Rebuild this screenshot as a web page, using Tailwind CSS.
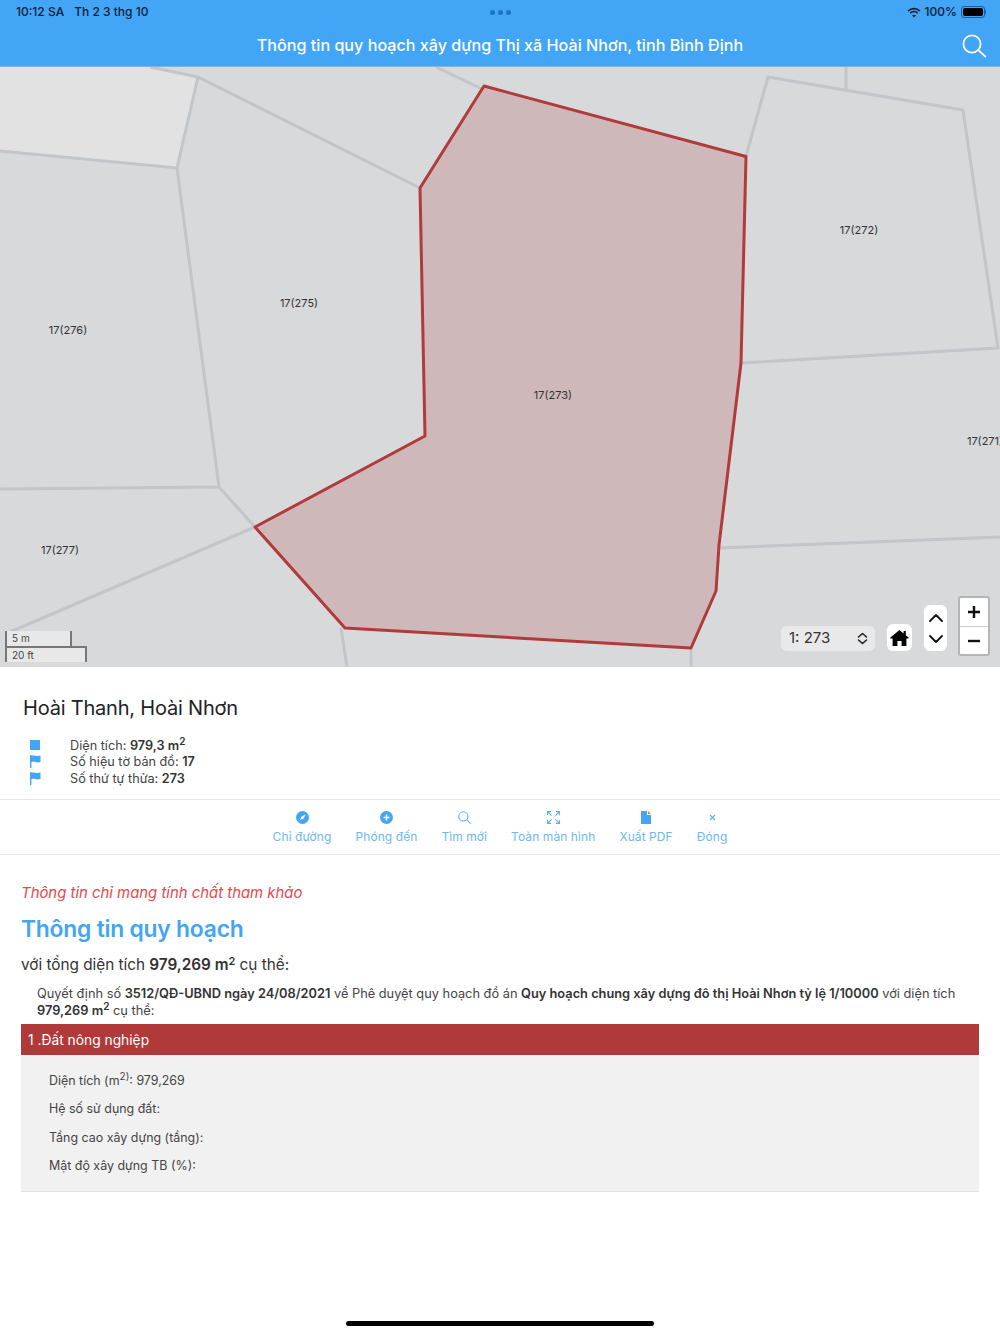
<!DOCTYPE html>
<html lang="vi">

<head>
    <meta charset="UTF-8">
    <meta name="viewport" content="width=device-width, initial-scale=1.0">
    <title>Thông tin quy hoạch</title>
    <script src="https://cdn.jsdelivr.net/npm/@tailwindcss/browser@4"></script>
</head>

<body class="bg-white font-['Inter','Liberation_Sans',sans-serif] text-[#333]">
    <div class="relative w-[1000px] h-[1334px] overflow-hidden flex flex-col">

        <!-- header -->
        <header class="relative h-[67px] shrink-0 bg-[#42a5f5] border-b border-[#7db4e3]">
            <div class="flex items-center justify-between h-[24px] pl-4 pr-[14px] text-[12px] font-medium text-[#0d2238]">
                <div class="flex gap-[10px]"><span>10:12 SA</span><span>Th 2 3 thg 10</span></div>
                <div class="flex items-center gap-[4px]">
                    <svg width="14" height="11" viewBox="0 0 14 11" fill="none" stroke="#0d2238" stroke-width="1.7">
                        <path d="M1 4 C4.4 .8 9.6 .8 13 4" />
                        <path d="M3.2 6.2 C5.4 4.2 8.6 4.2 10.8 6.2" />
                        <path d="M7 10.6 L5 8.3 C6.2 7.4 7.8 7.4 9 8.3 Z" fill="#0d2238" stroke="none" />
                    </svg>
                    <span>100%</span>
                    <div class="flex items-center">
                        <div class="w-[24px] h-[12px] rounded-[3px] border border-[#1d5f99] p-[1px]">
                            <div class="w-full h-full rounded-[2px] bg-black"></div>
                        </div>
                        <div class="w-[1px] h-[4px] bg-[#1d5f99]"></div>
                    </div>
                </div>
            </div>
            <div class="absolute left-[490px] top-[10px] flex gap-[3px]">
                <span class="w-[5px] h-[5px] rounded-full bg-[#1976c5]"></span>
                <span class="w-[5px] h-[5px] rounded-full bg-[#1976c5]"></span>
                <span class="w-[5px] h-[5px] rounded-full bg-[#1976c5]"></span>
            </div>
            <h1 class="absolute left-0 right-0 top-[34px] text-center text-white text-[16.15px] leading-[22px] font-medium">Thông tin quy hoạch xây dựng Thị xã Hoài Nhơn, tỉnh Bình Định</h1>
            <svg class="absolute left-[962px] top-[34px]" width="25" height="24" viewBox="0 0 25 24" fill="none" stroke="#fff" stroke-width="1.8" stroke-linecap="round">
                <circle cx="10" cy="10" r="8.6" />
                <path d="M16.2 16 L23.4 22.6" />
            </svg>
        </header>

        <!-- map -->
        <section class="relative h-[600px] shrink-0 bg-[#d8d9db] overflow-hidden">
            <svg class="block" width="1000" height="600" viewBox="0 67 1000 600" fill="none">
                <path d="M0 67 L150 67 L198 77 L177 168 L0 151 Z" fill="#e2e2e3" />
                <g stroke="#c2c5c9" stroke-width="3">
                    <path d="M150 67 L198 77 L420 188" />
                    <path d="M198 77 L177 168 L0 151" />
                    <path d="M177 168 L219 487 L0 489" />
                    <path d="M219 487 L255 527 L10 632" />
                    <path d="M436 67 L484 90" />
                    <path d="M746 156 L768 77 L963 110 L998 348 L741 363" />
                    <path d="M846 67 L846 89" />
                    <path d="M718 548 L1000 537" />
                    <path d="M341 628 L347 667" />
                    <path d="M691 648 L691 667" />
                </g>
                <path d="M484 86 L746 156.5 L741 363 L719 545 L716 591 L691 648 L345 628 L255 527 L425 436 L420 188 Z" fill="#cfb8b9" stroke="#b03a3c" stroke-width="3" stroke-linejoin="round" />
                <g fill="#333" font-size="11" text-anchor="middle">
                    <text x="859" y="233.5">17(272)</text>
                    <text x="299" y="306.5">17(275)</text>
                    <text x="68" y="334">17(276)</text>
                    <text x="553" y="398.5">17(273)</text>
                    <text x="985" y="445">17(271)</text>
                    <text x="60" y="553.5">17(277)</text>
                </g>
            </svg>

            <!-- scale -->
            <div class="absolute left-[5px] top-[564px] text-[10px] leading-[15px] text-[#444]">
                <div class="w-[67px] h-[15px] pl-[5px] bg-[#e8e8e8] border-l-2 border-r-2 border-[#777]">5 m</div>
                <div class="w-[82px] h-[16px] pl-[5px] bg-[#e8e8e8] border-l-2 border-r-2 border-t-2 border-[#777]">20 ft</div>
            </div>

            <!-- map controls -->
            <div class="absolute left-[781px] top-[559px] w-[94px] h-[25px] rounded-[6px] bg-[#e9e9ea] flex items-center justify-between pl-[8px] pr-[7px] text-[15px] text-[#333]">
                <span>1: 273</span>
                <svg width="11" height="13" viewBox="0 0 11 13" fill="none" stroke="#222" stroke-width="1.6" stroke-linecap="round" stroke-linejoin="round">
                    <path d="M1.5 5 L5.5 1.5 L9.5 5" />
                    <path d="M1.5 8 L5.5 11.5 L9.5 8" />
                </svg>
            </div>
            <div class="absolute left-[887px] top-[557px] w-[25px] h-[27px] rounded-[6px] bg-white flex items-center justify-center">
                <svg width="19" height="16" viewBox="0 0 19 16" fill="#000">
                    <path d="M9.5 0 L13.6 3.4 V1 H15.8 V5.2 L18.6 7.6 Q19.2 8.4 18.2 8.6 H16.4 V16 H11.6 V11 H7.4 V16 H2.6 V8.6 H.8 Q-.2 8.4 .4 7.6 Z" />
                </svg>
            </div>
            <div class="absolute left-[924px] top-[538px] w-[23px] h-[46px] rounded-[6px] bg-white flex flex-col items-center justify-center gap-[13px]">
                <svg width="14" height="8" viewBox="0 0 14 8" fill="none" stroke="#111" stroke-width="1.8" stroke-linecap="round" stroke-linejoin="round"><path d="M1 7 L7 1 L13 7" /></svg>
                <svg width="14" height="8" viewBox="0 0 14 8" fill="none" stroke="#111" stroke-width="1.8" stroke-linecap="round" stroke-linejoin="round"><path d="M1 1 L7 7 L13 1" /></svg>
            </div>
            <div class="absolute left-[958px] top-[529px] w-[32px] h-[60px] rounded-[3px] bg-white border-2 border-[#b4b5b7] flex flex-col">
                <div class="h-[29px] flex items-center justify-center border-b border-[#ccc]">
                    <svg width="12" height="12" viewBox="0 0 12 12" stroke="#111" stroke-width="2.4"><path d="M0 6 H12 M6 0 V12" /></svg>
                </div>
                <div class="flex-1 flex items-center justify-center">
                    <svg width="12" height="4" viewBox="0 0 12 4" stroke="#111" stroke-width="2.4"><path d="M0 2 H12" /></svg>
                </div>
            </div>
        </section>

        <!-- parcel info -->
        <section class="h-[133px] shrink-0 border-b border-[#e8e8e8] pl-[23px] pt-[28px]">
            <h2 class="text-[20px] leading-[26px] text-[#222] tracking-[-0.2px]">Hoài Thanh, Hoài Nhơn</h2>
            <ul class="mt-[16px] text-[12.7px] leading-[17px] text-[#444]">
                <li class="flex items-center h-[16.5px]">
                    <span class="w-[47px] pl-[7px]"><span class="block w-[10px] h-[10px] bg-[#42a5f5]"></span></span>
                    <span>Diện tích: <b class="font-semibold text-[#333]">979,3 m<sup class="text-[10px]">2</sup></b></span>
                </li>
                <li class="flex items-center h-[16.5px]">
                    <span class="w-[47px] pl-[7px]">
                        <svg class="block" width="11" height="13" viewBox="0 0 11 13" fill="#42a5f5"><path d="M0 0 H1.4 V13 H0 Z M1.4 .8 C4 -.4 6.5 2 10.5 .6 V7 C6.5 8.4 4 6 1.4 7.2 Z" /></svg>
                    </span>
                    <span>Số hiệu tờ bản đồ: <b class="font-semibold text-[#333]">17</b></span>
                </li>
                <li class="flex items-center h-[16.5px]">
                    <span class="w-[47px] pl-[7px]">
                        <svg class="block" width="11" height="13" viewBox="0 0 11 13" fill="#42a5f5"><path d="M0 0 H1.4 V13 H0 Z M1.4 .8 C4 -.4 6.5 2 10.5 .6 V7 C6.5 8.4 4 6 1.4 7.2 Z" /></svg>
                    </span>
                    <span>Số thứ tự thửa: <b class="font-semibold text-[#333]">273</b></span>
                </li>
            </ul>
        </section>

        <!-- actions -->
        <nav class="h-[55px] shrink-0 border-b border-[#e8e8e8] flex justify-center gap-[24px] pt-[11px] text-[12px] leading-[16px] tracking-[0.08px] text-[#6db8f3]">
            <a class="flex flex-col items-center gap-[5px]">
                <svg width="13" height="13" viewBox="0 0 13 13"><circle cx="6.5" cy="6.5" r="6.5" fill="#42a5f5" /><path d="M9.6 3.4 L7.6 7.6 L5.4 8.3 L3.4 9.6 L4.7 7.4 L5.4 5.4 Z" fill="#fff" /></svg>
                <span>Chỉ đường</span>
            </a>
            <a class="flex flex-col items-center gap-[5px]">
                <svg width="13" height="13" viewBox="0 0 13 13"><circle cx="6.5" cy="6.5" r="6.5" fill="#42a5f5" /><path d="M3.5 6.5 H9.5 M6.5 3.5 V9.5" stroke="#fff" stroke-width="1.5" /></svg>
                <span>Phóng đến</span>
            </a>
            <a class="flex flex-col items-center gap-[5px]">
                <svg width="13" height="13" viewBox="0 0 13 13" fill="none" stroke="#5aaff2" stroke-width="1.1"><circle cx="5.4" cy="5.4" r="4.6" /><path d="M8.8 8.8 L12.6 12.6" /></svg>
                <span>Tìm mới</span>
            </a>
            <a class="flex flex-col items-center gap-[5px]">
                <svg width="13" height="13" viewBox="0 0 13 13" fill="none" stroke="#5aaff2" stroke-width="1.1"><path d="M.6 4 V.6 H4 M.6 .6 L4.6 4.6 M9 .6 H12.4 V4 M12.4 .6 L8.4 4.6 M.6 9 V12.4 H4 M.6 12.4 L4.6 8.4 M9 12.4 H12.4 V9 M12.4 12.4 L8.4 8.4" /></svg>
                <span>Toàn màn hình</span>
            </a>
            <a class="flex flex-col items-center gap-[5px]">
                <svg width="10" height="13" viewBox="0 0 10 13" fill="#42a5f5"><path d="M0 0 H6 V4 H10 V13 H0 Z M7 0 L10 3 H7 Z" /></svg>
                <span>Xuất PDF</span>
            </a>
            <a class="flex flex-col items-center gap-[5px]">
                <svg width="13" height="13" viewBox="0 0 13 13" fill="none" stroke="#5aaff2" stroke-width="1.1"><path d="M4 4 L9 9 M9 4 L4 9" /></svg>
                <span>Đóng</span>
            </a>
        </nav>

        <!-- planning details -->
        <main class="px-[21px] pt-[28px]">
            <p class="text-[14.9px] leading-[20px] italic text-[#e5484d]">Thông tin chỉ mang tính chất tham khảo</p>
            <h2 class="mt-[11px] text-[22.8px] leading-[30px] font-semibold tracking-[-0.2px] text-[#42a5f5]">Thông tin quy hoạch</h2>
            <p class="mt-[11px] text-[15.3px] leading-[20px] text-[#333]">với tổng diện tích <b class="font-semibold">979,269 m<sup class="text-[11px]">2</sup></b> cụ thể:</p>
            <p class="mt-[10px] pl-[16px] text-[12.8px] leading-[17px] text-[#444]">Quyết định số <b class="font-semibold text-[#333]">3512/QĐ-UBND ngày 24/08/2021</b> về Phê duyệt quy hoạch đồ án <b class="font-semibold text-[#333]">Quy hoạch chung xây dựng đô thị Hoài Nhơn tỷ lệ 1/10000</b> với diện tích <b class="font-semibold text-[#333]">979,269 m<sup class="text-[10px]">2</sup></b> cụ thể:</p>
            <div class="mt-[5px] h-[31px] bg-[#b03a3a] flex items-center pl-[7px] pt-[2px] text-[13.8px] text-white">1 .Đất nông nghiệp</div>
            <div class="h-[137px] bg-[#f1f1f1] border-b border-[#e4e4e4] pl-[28px] pt-[12px] text-[12.45px] leading-[28.4px] text-[#444]">
                <p>Diện tích (m<sup class="text-[10px]">2)</sup>: 979,269</p>
                <p>Hệ số sử dụng đất:</p>
                <p>Tầng cao xây dựng (tầng):</p>
                <p>Mật độ xây dựng TB (%):</p>
            </div>
        </main>

        <!-- home indicator -->
        <div class="absolute left-[346px] top-[1321px] w-[308px] h-[5px] rounded-full bg-black"></div>
    </div>
</body>

</html>
